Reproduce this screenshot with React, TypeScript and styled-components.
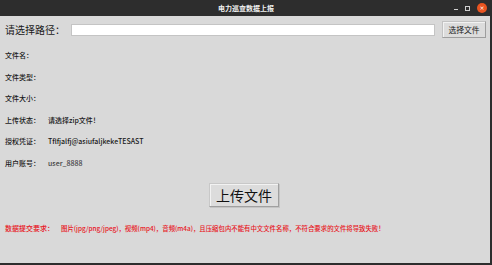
import React, { FC } from 'react';
import styled, { createGlobalStyle } from 'styled-components';

const GlobalStyle = createGlobalStyle`
  html, body {
    margin: 0;
    padding: 0;
    background: #d9d9d9;
  }
  * {
    box-sizing: border-box;
  }
`;

const FONT = `"Noto Sans CJK SC", "Noto Sans", sans-serif`;

const Window = styled.div`
  width: 492px;
  height: 265px;
  display: flex;
  flex-direction: column;
  font-family: ${FONT};
  overflow: hidden;
`;

const TitleBar = styled.div`
  height: 16px;
  flex-shrink: 0;
  background: #2d2d2d;
  display: flex;
  align-items: center;
  justify-content: center;
  position: relative;
`;

const Title = styled.span`
  color: #f0f0f0;
  font-size: 7px;
  font-weight: 700;
  line-height: 16px;
`;

const Controls = styled.div`
  position: absolute;
  right: 5px;
  top: 0;
  height: 16px;
  display: flex;
  align-items: center;
  gap: 7px;
`;

const Minimize = styled.span`
  width: 4px;
  height: 1px;
  background: #cfcfcf;
  margin-top: 2px;
`;

const Maximize = styled.span`
  width: 5px;
  height: 5px;
  border: 1px solid #cfcfcf;
`;

const Close = styled.span`
  width: 10px;
  height: 10px;
  border-radius: 50%;
  background: #e95420;
  display: flex;
  align-items: center;
  justify-content: center;
  color: #fff;
  font-size: 6px;
  line-height: 1;
  font-family: "DejaVu Sans", sans-serif;
`;

const Body = styled.div`
  flex: 1;
  background: #d9d9d9;
  border-right: 2px solid #2d2d2d;
  border-bottom: 2px solid #2d2d2d;
  padding: 5px 0 0 5px;
  display: flex;
  flex-direction: column;
`;

const PathRow = styled.div`
  height: 17px;
  display: flex;
  align-items: center;
  padding-right: 4px;
`;

const PathLabel = styled.span`
  width: 66px;
  font-size: 10px;
  color: #1a1a1a;
  white-space: nowrap;
`;

const PathInput = styled.div`
  width: 364px;
  height: 12px;
  background: #ffffff;
  border: 1px solid #c4c4c4;
`;

const SmallButton = styled.button`
  margin-left: 7px;
  width: 44px;
  height: 17px;
  padding: 0;
  font-family: ${FONT};
  font-size: 7.8px;
  color: #1a1a1a;
  background: #dcdcdc;
  border: 1px solid #c2c2c2;
  border-right-color: #9e9e9e;
  border-bottom-color: #9e9e9e;
  box-shadow: inset 1px 1px 0 #f2f2f2;
`;

const InfoList = styled.div`
  margin-top: 6.25px;
  display: grid;
  grid-template-columns: 43px 1fr;
  grid-auto-rows: 21.5px;
  align-items: center;
`;

const Label = styled.span<{ $color?: string }>`
  font-size: 7px;
  font-weight: 500;
  color: ${(p) => p.$color || '#1a1a1a'};
  white-space: nowrap;
`;

const Value = styled.span<{ $color?: string; $size?: number }>`
  font-size: ${(p) => p.$size || 7}px;
  font-weight: 500;
  color: ${(p) => p.$color || '#1a1a1a'};
  white-space: nowrap;
`;

const UploadArea = styled.div`
  margin-top: 9.75px;
  display: flex;
  justify-content: center;
  padding-right: 7px;
`;

const UploadButton = styled.button`
  width: 70px;
  height: 24px;
  padding: 0;
  font-family: ${FONT};
  font-size: 14px;
  color: #111;
  background: #dcdcdc;
  border: 1px solid #c8c8c8;
  border-right-color: #a0a0a0;
  border-bottom-color: #a0a0a0;
  box-shadow: inset 1px 1px 0 #f2f2f2, 1px 1px 0 #c4c4c4;
  line-height: 1;
`;

const NoticeRow = styled.div`
  margin-top: 16px;
  height: 10px;
  display: grid;
  grid-template-columns: 56px 1fr;
  align-items: center;
`;

const infos: { label: string; value: string; color?: string }[] = [
  { label: '文件名：', value: '' },
  { label: '文件类型：', value: '' },
  { label: '文件大小：', value: '' },
  { label: '上传状态：', value: '请选择zip文件！' },
  { label: '授权凭证：', value: 'Tflfjalfj@asiufaljkekeTESAST' },
  { label: '用户账号：', value: 'user_8888', color: '#444' },
];

const RED = '#e8141c';

const App: FC = () => (
  <>
    <GlobalStyle />
    <Window>
      <TitleBar>
        <Title>电力巡查数据上报</Title>
        <Controls>
          <Minimize />
          <Maximize />
          <Close>×</Close>
        </Controls>
      </TitleBar>
      <Body>
        <PathRow>
          <PathLabel>请选择路径：</PathLabel>
          <PathInput />
          <SmallButton type="button">选择文件</SmallButton>
        </PathRow>
        <InfoList>
          {infos.map((info) => (
            <React.Fragment key={info.label}>
              <Label>{info.label}</Label>
              <Value $color={info.color}>{info.value}</Value>
            </React.Fragment>
          ))}
        </InfoList>
        <UploadArea>
          <UploadButton type="button">上传文件</UploadButton>
        </UploadArea>
        <NoticeRow>
          <Label $color={RED}>数据提交要求：</Label>
          <Value $color={RED} $size={6.4}>
            图片(jpg/png/jpeg)，视频(mp4)，音频(m4a)，且压缩包内不能有中文文件名称，不符合要求的文件将导致失败！
          </Value>
        </NoticeRow>
      </Body>
    </Window>
  </>
);

export default App;
